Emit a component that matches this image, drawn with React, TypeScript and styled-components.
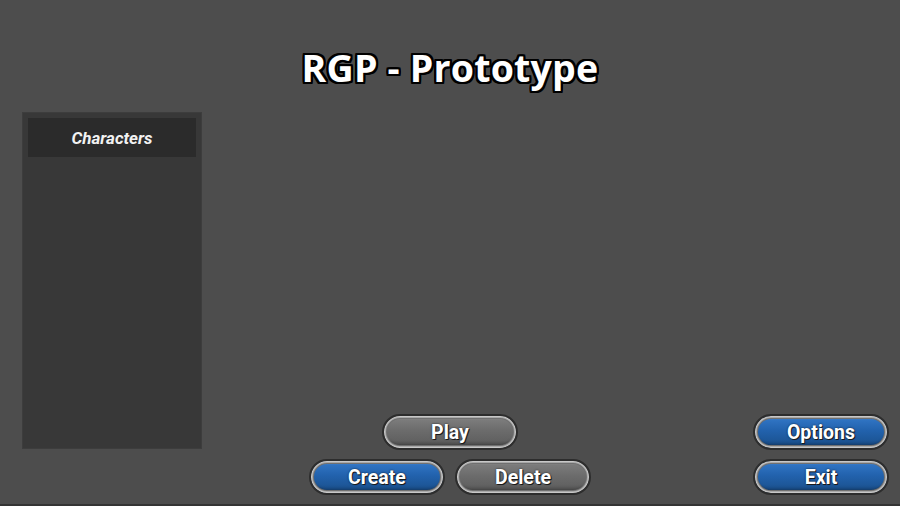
import React from "react";
import styled, { createGlobalStyle, css } from "styled-components";

const Global = createGlobalStyle`
  html, body { margin: 0; padding: 0; background: #4d4d4d; }
  #root { width: 900px; height: 506px; }
`;

const Page = styled.div`
  width: 900px;
  height: 506px;
  box-sizing: border-box;
  background: #4d4d4d;
  border-bottom: 2px solid #343434;
  display: grid;
  grid-template-rows: 112px 1fr;
  overflow: hidden;
`;

const TitleBar = styled.header`
  display: flex;
  justify-content: center;
  align-items: center;
  padding-top: 22px;
  box-sizing: border-box;
`;

const Title = styled.h1`
  margin: 0;
  font-family: "Open Sans", "Noto Sans", sans-serif;
  font-weight: 700;
  font-size: 37.5px;
  color: #ffffff;
  letter-spacing: 0.2px;
  text-shadow:
    -2px -2px 0 #000, 2px -2px 0 #000, -2px 2px 0 #000, 2px 2px 0 #000,
    0 -2px 0 #000, 0 2px 0 #000, -2px 0 0 #000, 2px 0 0 #000,
    -1px -2px 0 #000, 1px -2px 0 #000, -1px 2px 0 #000, 1px 2px 0 #000,
    -2px -1px 0 #000, 2px -1px 0 #000, -2px 1px 0 #000, 2px 1px 0 #000;
`;

const Body = styled.main`
  display: grid;
  grid-template-columns: 1fr auto 1fr;
  padding-bottom: 9px;
  min-height: 0;
`;

const Panel = styled.aside`
  justify-self: start;
  align-self: start;
  margin-left: 22px;
  width: 180px;
  height: 337px;
  box-sizing: border-box;
  background: #383838;
  border: 1px solid #3d3d3d;
  padding: 5px;
`;

const PanelHeader = styled.div`
  height: 39px;
  background: #2b2b2b;
  display: flex;
  align-items: center;
  justify-content: center;
  font-family: Roboto, "Liberation Sans", sans-serif;
  font-style: italic;
  font-weight: 700;
  font-size: 17px;
  color: #f2f2f2;
`;

const CenterCluster = styled.div`
  align-self: end;
  display: grid;
  grid-template-columns: auto auto;
  column-gap: 10px;
  row-gap: 9px;
  justify-items: center;
`;

const RightCluster = styled.div`
  align-self: end;
  justify-self: end;
  margin-right: 11px;
  display: flex;
  flex-direction: column;
  gap: 9px;
`;

const SpanRow = styled.div`
  grid-column: 1 / span 2;
`;

const blue = css`
  background: linear-gradient(
    to bottom,
    #5a98e0 0px,
    #2f73c2 4px,
    #2262ad 45%,
    #1d5799 75%,
    #143e6f 100%
  );
`;

const grey = css`
  background: linear-gradient(
    to bottom,
    #9a9a9a 0px,
    #7b7b7b 4px,
    #6c6c6c 45%,
    #626262 75%,
    #454545 100%
  );
`;

const Button = styled.button<{ $variant: "blue" | "grey" }>`
  width: 136px;
  height: 36px;
  box-sizing: border-box;
  border-radius: 18px;
  border: 2px solid #2d2d2d;
  padding: 0;
  ${(p) => (p.$variant === "blue" ? blue : grey)}
  box-shadow:
    inset 0 0 0 1px #c8c8c8,
    inset 0 0 0 2px #a8a8a8,
    inset 0 0 0 3px #707070,
    inset 0 -4px 3px -1px rgba(0, 0, 0, 0.35);
  font-family: Roboto, "Liberation Sans", sans-serif;
  font-weight: 700;
  font-size: 19.5px;
  color: #ffffff;
  text-shadow: 1px 1px 0 #1a1a1a, 0 0 2px rgba(0, 0, 0, 0.8);
  display: flex;
  align-items: center;
  justify-content: center;
  cursor: pointer;
`;

export default function App() {
  return (
    <>
      <Global />
      <Page>
        <TitleBar>
          <Title>RGP - Prototype</Title>
        </TitleBar>
        <Body>
          <Panel>
            <PanelHeader>Characters</PanelHeader>
          </Panel>
          <CenterCluster>
            <SpanRow>
              <Button $variant="grey">Play</Button>
            </SpanRow>
            <Button $variant="blue">Create</Button>
            <Button $variant="grey">Delete</Button>
          </CenterCluster>
          <RightCluster>
            <Button $variant="blue">Options</Button>
            <Button $variant="blue">Exit</Button>
          </RightCluster>
        </Body>
      </Page>
    </>
  );
}
